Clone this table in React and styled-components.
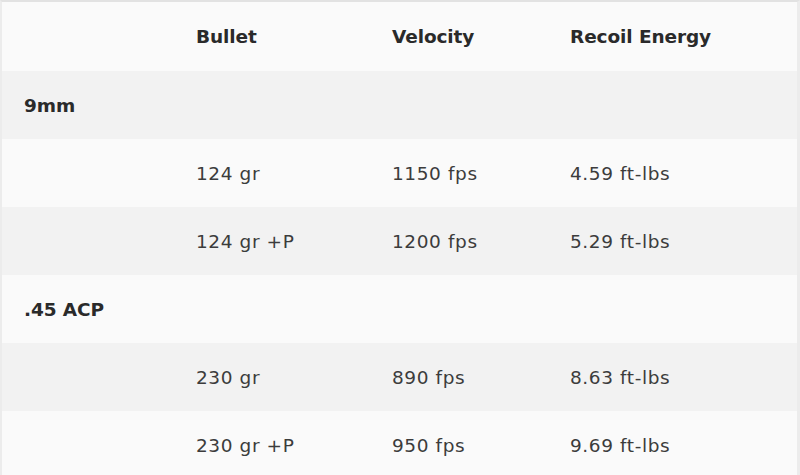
import React from 'react'
import styled, { createGlobalStyle } from 'styled-components'

const GlobalStyle = createGlobalStyle`
    html, body {
        margin: 0;
        padding: 0;
        background: #fafafa;
        overflow: hidden;
    }
    body {
        font-family: "DejaVu Sans", "Open Sans", sans-serif;
        color: #2e2e2e;
    }
`

const Frame = styled.div`
    width: 800px;
    height: 475px;
    box-sizing: border-box;
    border-top: 2px solid #e2e2e2;
    border-left: 2px solid #ececec;
    border-right: 3px solid #ececec;
    background: #fafafa;
    overflow: hidden;
`

const Table = styled.table`
    width: 100%;
    border-collapse: collapse;
    table-layout: fixed;
`

const Row = styled.tr`
    height: ${(props) => props.h || 68}px;
    background: ${(props) => (props.shaded ? '#f2f2f2' : '#fafafa')};
`

const HeadCell = styled.th`
    text-align: left;
    font-size: 18.5px;
    font-weight: 700;
    letter-spacing: -0.1px;
    padding: 0 0 0 ${(props) => props.pad || 0}px;
    color: #2a2a2a;
`

const Cell = styled.td`
    font-size: ${(props) => (props.bold ? 18.5 : 18.5)}px;
    font-weight: ${(props) => (props.bold ? 700 : 400)};
    letter-spacing: ${(props) => (props.bold ? -0.1 : 0.6)}px;
    padding: 0 0 0 ${(props) => props.pad || 0}px;
    color: ${(props) => (props.bold ? '#2a2a2a' : '#3c3c3c')};
`

const data = [
    { name: '9mm', loads: [['124 gr', '1150 fps', '4.59 ft-lbs'], ['124 gr +P', '1200 fps', '5.29 ft-lbs']] },
    { name: '.45 ACP', loads: [['230 gr', '890 fps', '8.63 ft-lbs'], ['230 gr +P', '950 fps', '9.69 ft-lbs']] },
]

export default () => {
    let i = 0
    const rows = []
    data.forEach((group) => {
        i++
        rows.push(
            <Row key={group.name} shaded={i % 2 === 1}>
                <Cell bold pad={22}>{group.name}</Cell>
                <Cell />
                <Cell />
                <Cell />
            </Row>
        )
        group.loads.forEach((load) => {
            i++
            rows.push(
                <Row key={group.name + load[0]} shaded={i % 2 === 1}>
                    <Cell />
                    <Cell>{load[0]}</Cell>
                    <Cell>{load[1]}</Cell>
                    <Cell>{load[2]}</Cell>
                </Row>
            )
        })
    })
    return (
        <>
            <GlobalStyle />
            <Frame>
                <Table>
                    <colgroup>
                        <col style={{ width: 194 }} />
                        <col style={{ width: 196 }} />
                        <col style={{ width: 178 }} />
                        <col />
                    </colgroup>
                    <thead>
                        <Row h={69}>
                            <HeadCell pad={22}></HeadCell>
                            <HeadCell>Bullet</HeadCell>
                            <HeadCell>Velocity</HeadCell>
                            <HeadCell>Recoil Energy</HeadCell>
                        </Row>
                    </thead>
                    <tbody>{rows}</tbody>
                </Table>
            </Frame>
        </>
    )
}
